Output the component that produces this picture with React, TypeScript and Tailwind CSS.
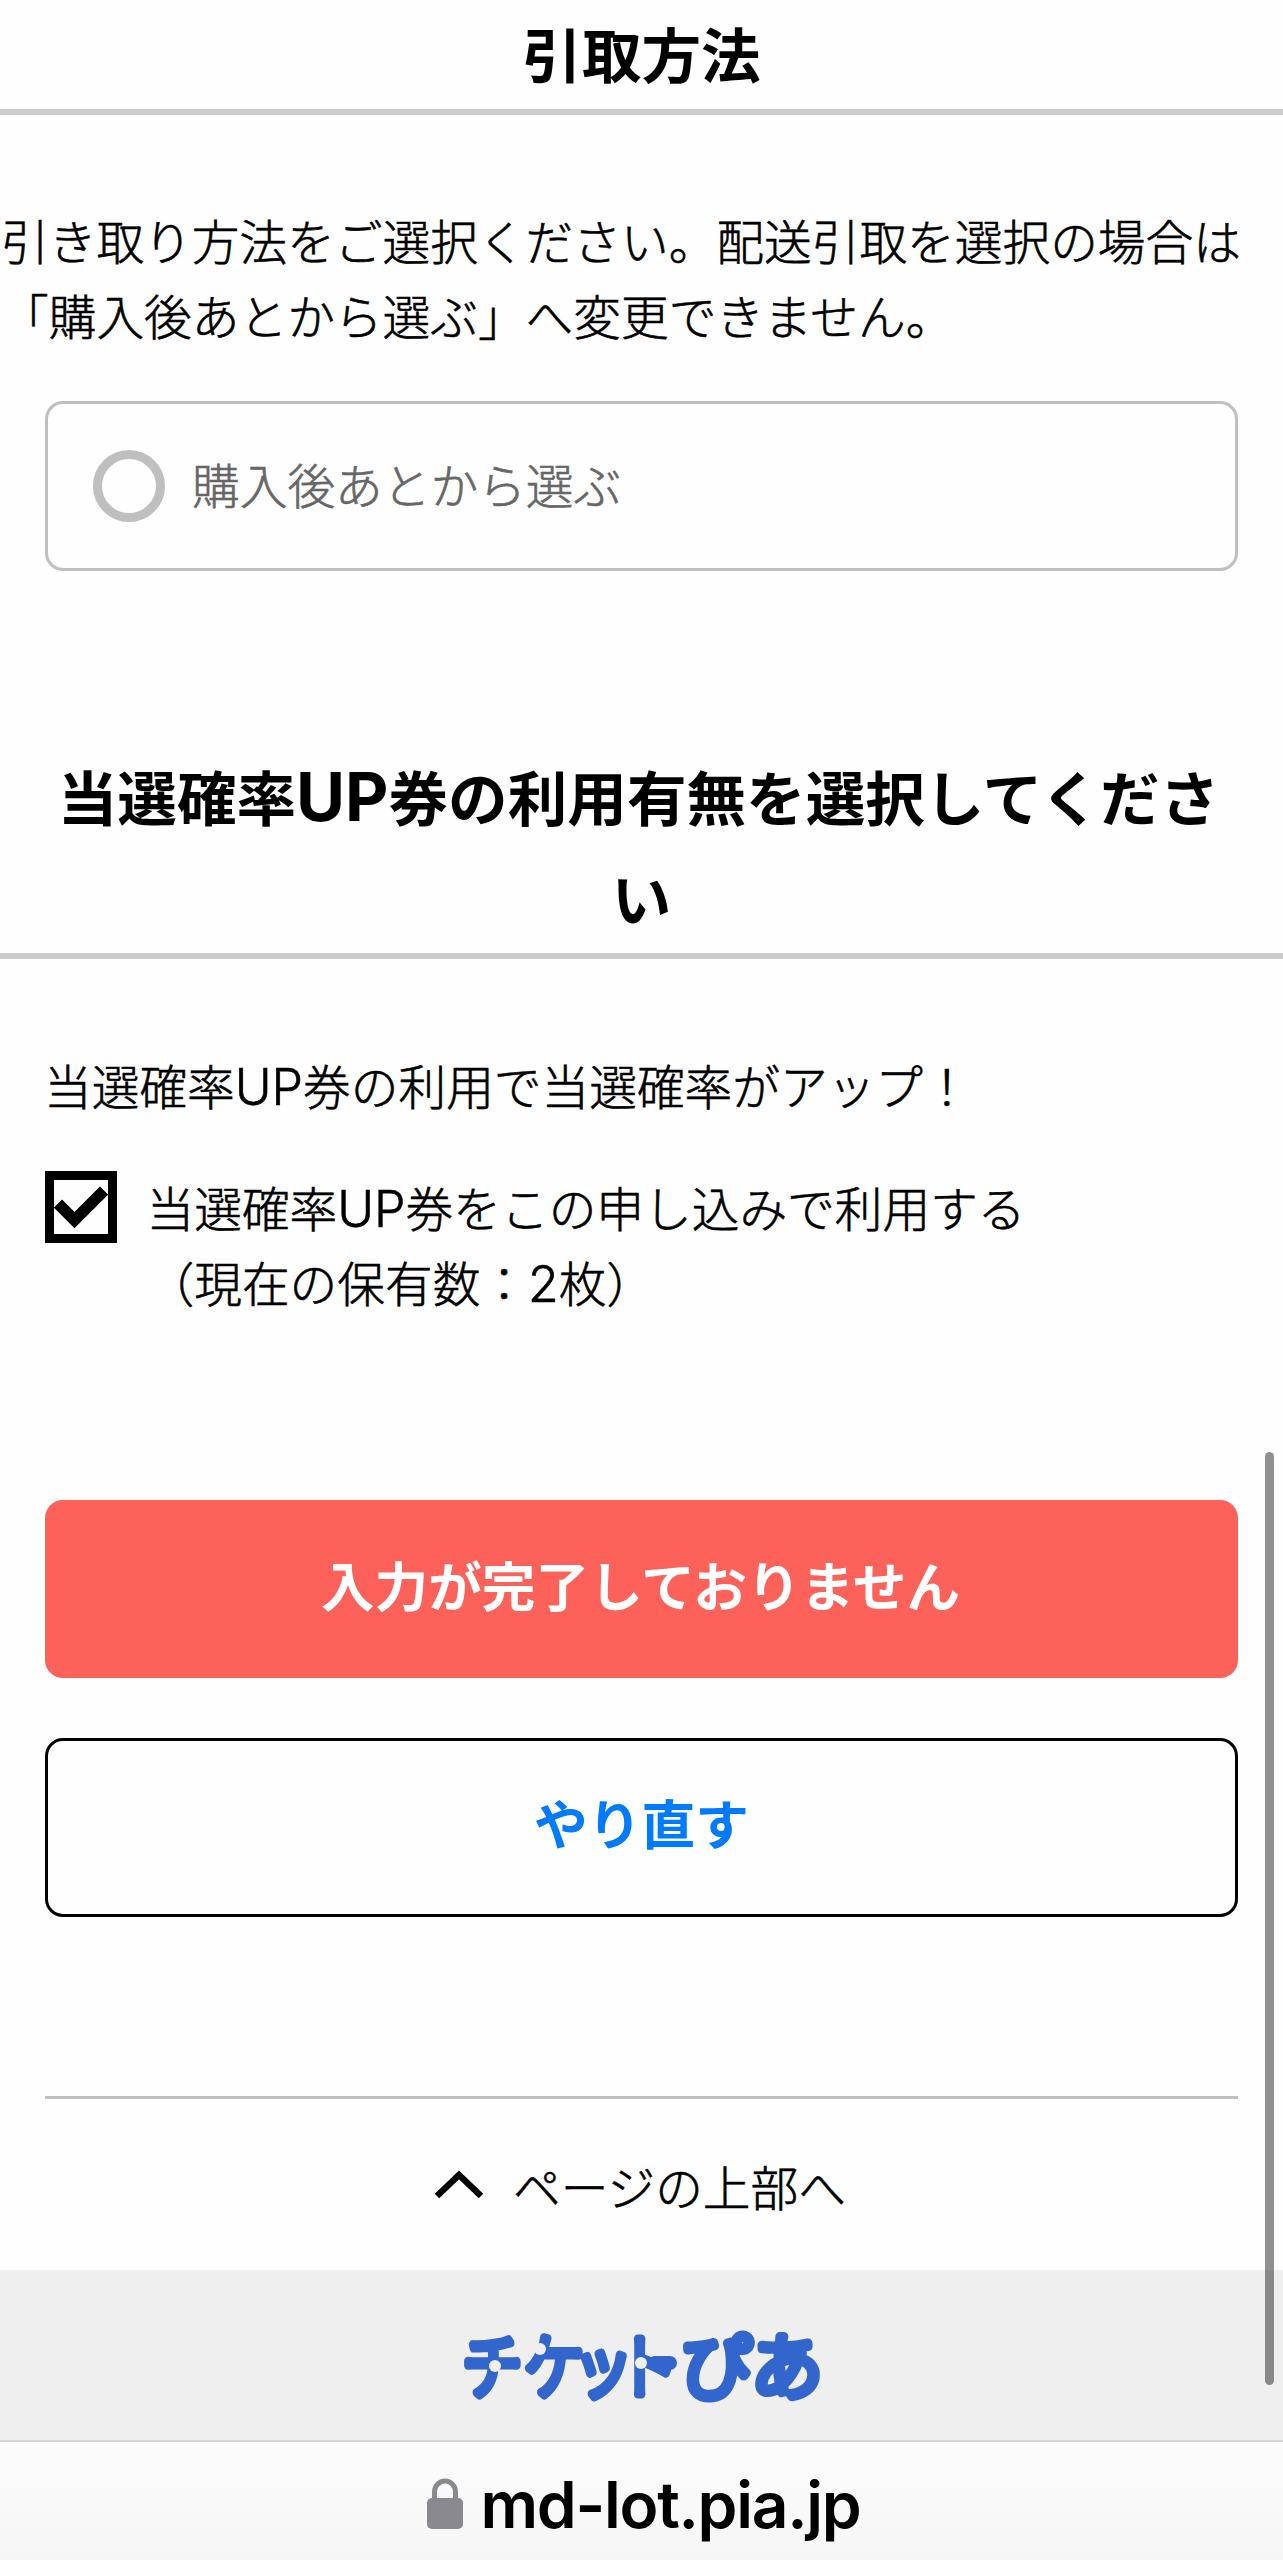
import type { ReactNode } from "react"

function Latin({ children }: { children: ReactNode }) {
  return <span className="font-['Inter',Arial,sans-serif] text-[1.05em] leading-none">{children}</span>
}

function SectionHeading({ children }: { children: ReactNode }) {
  return (
    <h2 className="border-b-6 border-[#ccc] px-[45px] text-center text-[59.6px] font-bold [-webkit-text-stroke:0px]">
      {children}
    </h2>
  )
}

function TicketPiaLogo() {
  return (
    <svg width="370" height="84" viewBox="457 2324 370 84" className="overflow-visible">
      <g
        fill="#3366cc"
        stroke="#3366cc"
        strokeWidth="9"
        strokeLinejoin="round"
        className="font-['Noto_Sans_CJK_JP',sans-serif] font-light"
      >
        <text transform="translate(457 2393) scale(0.86 1)" x="6 78 135 186" className="text-[70px]">
          チケット
        </text>
        <text transform="translate(680 2393)" x="0 71" className="text-[72px]">
          ぴあ
        </text>
      </g>
      <rect x="648" y="2356" width="29" height="14" rx="7" fill="#3366cc" />
      <g fill="#efefef">
        <circle cx="495" cy="2366" r="6" />
        <circle cx="540" cy="2349" r="6" />
        <circle cx="641" cy="2363" r="6" />
      </g>
    </svg>
  )
}

export default function App() {
  return (
    <main className="relative h-[2560px] w-[1283px] overflow-hidden bg-[#fefefe] font-['Noto_Sans_CJK_JP',sans-serif] text-[47.7px] leading-[74.5px] font-light text-black [-webkit-text-stroke:0.6px]">
      <SectionHeading>
        <span className="block h-[109px] leading-[105px]">引取方法</span>
      </SectionHeading>

      <p className="mt-[88px] ml-px whitespace-nowrap">
        引き取り方法をご選択ください。配送引取を選択の場合は
        <br />
        「購入後あとから選ぶ」へ変更できません。
      </p>

      <label className="mx-[45px] mt-[49px] flex h-[170px] items-center rounded-[18px] border-3 border-[#bfbfbf] pl-[45px] text-[#666]">
        <span className="size-[72px] rounded-full border-9 border-[#bfbfbf]" />
        <span className="-mt-[3px] ml-[27px]">購入後あとから選ぶ</span>
      </label>

      <div className="mt-[174px]">
        <SectionHeading>
          <span className="-mx-5 block h-[208px] leading-[101px] whitespace-nowrap">
            <span className="-ml-[6px]">
              当選確率<span className="font-['Inter',Arial,sans-serif] text-[67px] leading-none">UP</span>
              券の利用有無を選択してくださ
            </span>
            <br />い
          </span>
        </SectionHeading>
      </div>

      <p className="mt-[89px] ml-[44px] whitespace-nowrap">
        当選確率<Latin>UP</Latin>券の利用で当選確率がアップ！
      </p>

      <label className="mt-[46.5px] ml-[45px] flex">
        <span className="mt-[2px] flex size-[72px] items-center justify-center border-9 border-black">
          <svg width="54" height="54" viewBox="0 0 54 54" fill="none" stroke="#000" strokeWidth="11.5">
            <path d="M4 23.5 20.5 40 50 10.5" />
          </svg>
        </span>
        <span className="mt-px -mb-px ml-[29.5px] whitespace-nowrap">
          当選確率<Latin>UP</Latin>券をこの申し込みで利用する
          <br />
          （現在の保有数：<Latin>2</Latin>枚）
        </span>
      </label>

      <div className="mx-[45px] mt-[182px] flex flex-col gap-[60px] text-[53.7px] font-bold [-webkit-text-stroke:0px]">
        <button className="h-[178px] rounded-[18px] bg-[#fc615a] pr-[2px] pb-[10px] text-white">入力が完了しておりません</button>
        <button className="h-[179px] rounded-[18px] border-3 border-black pb-[10px] text-[#007aff]">やり直す</button>
      </div>

      <hr className="mx-[45px] mt-[179px] border-t-3 border-[#bfbfbf]" />

      <a className="mt-[50px] flex h-[75px] items-center justify-center pr-[3px]">
        <svg width="50" height="30" viewBox="0 0 50 30" fill="none" stroke="#000" strokeWidth="6.5" className="-mt-1">
          <path d="M3 26 25 5 47 26" />
        </svg>
        <span className="ml-[29px]">ページの上部へ</span>
      </a>

      <footer className="mt-[46px] flex h-[172px] justify-center border-b-2 border-[#d4d4d4] bg-[#efefef] pt-[54px]">
        <TicketPiaLogo />
      </footer>

      <div className="flex h-[118px] justify-center bg-linear-to-b from-[#fcfcfc] to-[#f6f6f6] pt-[36px] pl-[4px] [-webkit-text-stroke:0px]">
        <svg width="36" height="51" viewBox="0 0 36 51">
          <rect y="20" width="36" height="31" rx="5" fill="#8a8a8e" />
          <path d="M7.500 22V14a10.500 11 0 0 1 21 0v8" fill="none" stroke="#8a8a8e" strokeWidth="5" />
        </svg>
        <span className="ml-[18px] font-['Inter',sans-serif] text-[64px] leading-[53px] font-semibold tracking-[-0.020em]">
          md-lot.pia.jp
        </span>
      </div>

      <div className="absolute top-[1452px] left-[1265px] h-[933px] w-[9px] rounded-full bg-black/43" />
    </main>
  )
}
